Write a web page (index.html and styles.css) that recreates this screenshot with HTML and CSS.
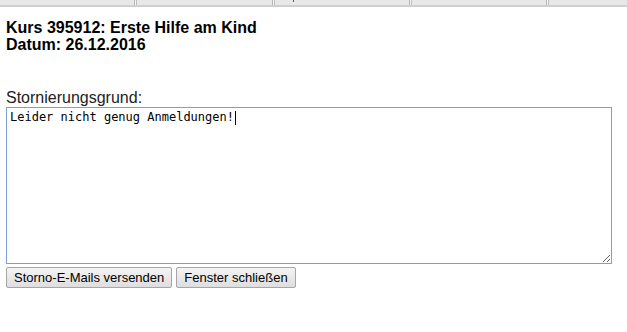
FILE: index.html
```html
<html>
  <head>
    <link rel="stylesheet" href="styles.css">
  </head>
  <body>
    <div class="tabs">
      <div class="tab"></div>
      <div class="tab"></div>
      <div class="tab"><span class="tab-mark"></span></div>
      <div class="tab"></div>
      <div class="tab"></div>
    </div>
    <div class="page">
      <h1 class="title">Kurs 395912: Erste Hilfe am Kind<br>Datum: 26.12.2016</h1>
      <form class="storno">
        <label for="reason">Stornierungsgrund:</label>
        <div class="reason-box">
          <textarea id="reason">Leider nicht genug Anmeldungen!</textarea>
          <span class="caret"></span>
        </div>
        <div class="actions">
          <button type="button">Storno-E-Mails versenden</button>
          <button type="button">Fenster schließen</button>
        </div>
      </form>
    </div>
  </body>
</html>
```

FILE: styles.css
```css
body {
  margin: 0;
  font-family: "Liberation Sans", Arial, sans-serif;
  background: white;
}
.tabs {
  display: flex;
  height: 5px;
  background: #e8e8e8;
  border-bottom: 2px solid #cfcfcf;
}
.tab {
  width: 134px;
  border-right: 1px solid #b5b5b5;
  box-shadow: 1px 0 0 #f6f6f6, 2px 0 0 #bdbdbd;
  margin-right: 2px;
  position: relative;
}
.tab:nth-child(2) {
  width: 135px;
}
.tab:last-child {
  flex: 1;
  border-right: none;
  box-shadow: none;
}
.tab-mark {
  position: absolute;
  left: 18px;
  top: 0;
  width: 1px;
  height: 2px;
  background: #7a3a9a;
}
.page {
  padding: 12px 6px 0 6px;
}
.title {
  font-size: 16px;
  line-height: 17px;
  font-weight: bold;
  margin: 0;
  color: #000;
}
.storno {
  margin-top: 36px;
}
.storno label {
  display: block;
  font-size: 16px;
  line-height: 18px;
  color: #222;
}
.reason-box {
  position: relative;
  width: 606px;
  height: 157px;
}
.reason-box textarea {
  box-sizing: border-box;
  width: 606px;
  height: 157px;
  margin: 0;
  padding: 2px 3px;
  border: 1px solid #7b9fd6;
  outline: none;
  resize: both;
  font-family: "DejaVu Sans Mono", "Liberation Mono", monospace;
  font-size: 12px;
  line-height: 15px;
  color: #000;
  display: block;
}
.caret {
  position: absolute;
  left: 229px;
  top: 4px;
  width: 1px;
  height: 14px;
  background: #000;
}
.actions {
  display: flex;
  gap: 4px;
  margin-top: 3px;
}
.actions button {
  font-family: "Liberation Sans", Arial, sans-serif;
  font-size: 13px;
  color: #000;
  height: 21px;
  padding: 0 7px;
  border: 1px solid #a6a6a6;
  border-radius: 2px;
  background: linear-gradient(#f4f4f4, #dedede);
}
```
